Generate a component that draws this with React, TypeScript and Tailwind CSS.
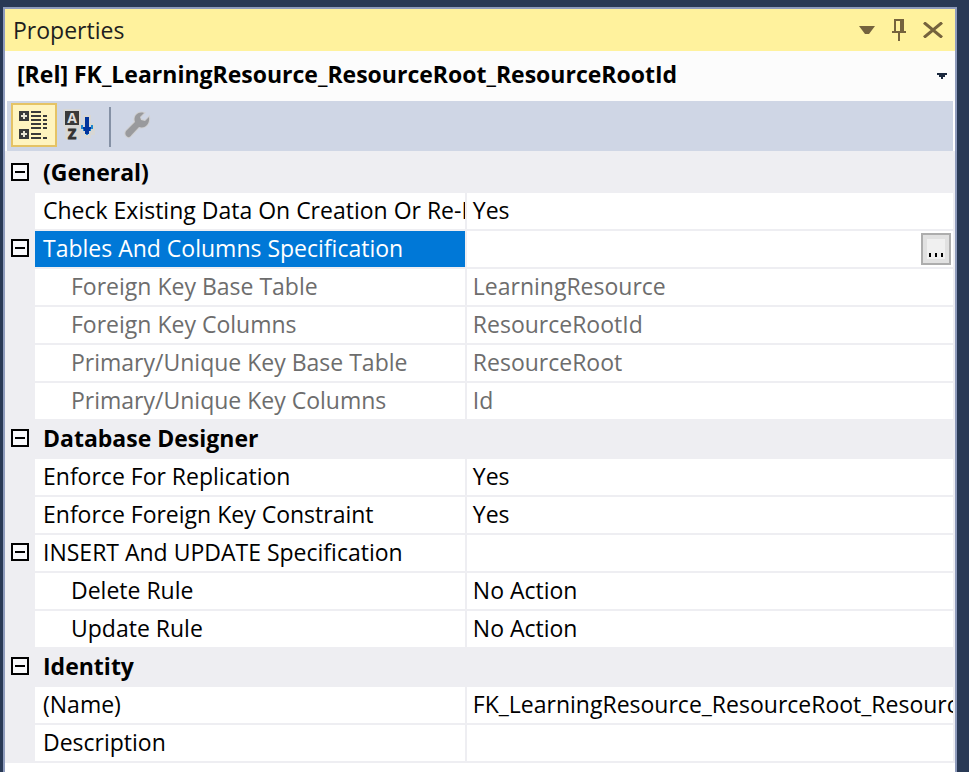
import type { ReactNode } from "react";

type Row = {
  kind: "category" | "group" | "item" | "child";
  name: string;
  value?: string;
  readOnly?: boolean;
  selected?: boolean;
};

const rows: Row[] = [
  { kind: "category", name: "(General)" },
  { kind: "item", name: "Check Existing Data On Creation Or Re-E", value: "Yes" },
  { kind: "group", name: "Tables And Columns Specification", selected: true },
  { kind: "child", name: "Foreign Key Base Table", value: "LearningResource", readOnly: true },
  { kind: "child", name: "Foreign Key Columns", value: "ResourceRootId", readOnly: true },
  { kind: "child", name: "Primary/Unique Key Base Table", value: "ResourceRoot", readOnly: true },
  { kind: "child", name: "Primary/Unique Key Columns", value: "Id", readOnly: true },
  { kind: "category", name: "Database Designer" },
  { kind: "item", name: "Enforce For Replication", value: "Yes" },
  { kind: "item", name: "Enforce Foreign Key Constraint", value: "Yes" },
  { kind: "group", name: "INSERT And UPDATE Specification" },
  { kind: "child", name: "Delete Rule", value: "No Action" },
  { kind: "child", name: "Update Rule", value: "No Action" },
  { kind: "category", name: "Identity" },
  { kind: "item", name: "(Name)", value: "FK_LearningResource_ResourceRoot_Resource" },
  { kind: "item", name: "Description" },
];

function IconButton({ label, className, children }: { label: string; className: string; children: ReactNode }) {
  return (
    <button type="button" aria-label={label} className={`flex items-center justify-center ${className}`}>
      {children}
    </button>
  );
}

function TitleBar() {
  return (
    <header className="flex h-[42px] shrink-0 items-center justify-between bg-[#fff29d] pr-1 pl-2 text-[#1e1e1e]">
      <h1 className="leading-8">Properties</h1>
      <div className="flex items-center text-[#75633d]">
        <IconButton label="Window position" className="h-8 w-8">
          <svg width="16" height="8" viewBox="0 0 16 8" fill="currentColor">
            <path d="M0 0h16L10 8H6z" />
          </svg>
        </IconButton>
        <IconButton label="Auto hide" className="h-8 w-8">
          <svg width="14" height="22" viewBox="0 0 14 22" fill="currentColor" shapeRendering="crispEdges">
            <path d="M2 0h10v12h2v2H8v8H6v-8H0v-2h2zM4 2v10h4V2z" fillRule="evenodd" />
          </svg>
        </IconButton>
        <IconButton label="Close" className="h-8 w-9">
          <svg width="20" height="16" viewBox="0 0 20 16" fill="none" stroke="currentColor" strokeWidth="3">
            <path d="M1 0.500L19 15.500M19 0.500L1 15.500" />
          </svg>
        </IconButton>
      </div>
    </header>
  );
}

function ObjectPicker() {
  return (
    <div className="relative h-[50px] shrink-0 bg-[#fcfcfc]">
      <select
        aria-label="Selected object"
        className="block h-[46px] w-full appearance-none bg-transparent pr-8 pl-3 font-bold text-black outline-none"
      >
        <option>[Rel] FK_LearningResource_ResourceRoot_ResourceRootId</option>
      </select>
      <svg
        className="pointer-events-none absolute top-[22px] right-2"
        width="10"
        height="6"
        viewBox="0 0 10 6"
        fill="#1b293e"
        shapeRendering="crispEdges"
      >
        <path d="M0 0h10v2H8v2H6v2H4V4H2V2H0z" />
      </svg>
    </div>
  );
}

function CategorizedIcon() {
  return (
    <svg width="28" height="28" viewBox="0 0 14 14" fill="#3a3a3a" shapeRendering="crispEdges">
      <path d="M0 0h5v5H0zM0 9h5v5H0z" />
      <path d="M2 1h1v1h1v1H3v1H2V3H1V2h1zM2 10h1v1h1v1H3v1H2v-1H1v-1h1z" fill="#e8e4d4" />
      <path d="M6 0h5v1H6zM6 2h5v1H6zM6 4h5v1H6zM6 6h5v1H6zM6 8h5v1H6zM6 11h5v1H6zM6 13h5v1H6z" />
      <path d="M12 2h2v1h-2zM12 4h2v1h-2zM12 6h2v1h-2zM12 8h2v1h-2zM12 13h2v1h-2z" />
    </svg>
  );
}

function AlphabeticalIcon() {
  return (
    <svg width="32" height="32" viewBox="0 0 32 32" className="overflow-visible">
      <path d="M0 0h18v18H0zM2 18h16v12H2zM20 6h8v8h4v12h-4v3h-8v-3h-4V14h4z" fill="#d7d7d5" />
      <path d="M2 2h14v14H2z" fill="#3a3a3a" />
      <text x="9" y="14" textAnchor="middle" className="text-[14px] font-bold" fill="#dedede">
        A
      </text>
      <text x="9" y="30" textAnchor="middle" className="text-[14px] font-bold" fill="#333333" stroke="#333333">
        Z
      </text>
      <path d="M18 16h2v2h2v2h4v-2h2v-2h2v4h-2v2h-2v2h-1v2h-2v-2h-1v-2h-2v-2h-2z" fill="#1c86cf" />
      <path d="M22 8h4v10h2v2h-1v2h-1v3h-4v-3h-1v-2h-1v-2h2z" fill="#00339c" />
    </svg>
  );
}

function WrenchIcon() {
  return (
    <svg width="28" height="28" viewBox="0 0 28 28">
      <path
        d="M20 2C14 0 9 5 11 11L2 20C1 22 1 24 3 25.500C5 27 6 26 7.500 24L15 16C21 18 26 13 25 6L21 10L17 9L16 6Z"
        fill="#999a9d"
        stroke="#cfcfd0"
        strokeWidth="2"
        paintOrder="stroke"
      />
    </svg>
  );
}

function Toolbar() {
  return (
    <div className="mx-0.5 flex h-[50px] shrink-0 items-start bg-[#cfd6e5] pt-0.5 pl-1">
      <IconButton label="Categorized" className="h-11 w-[46px] border-2 border-[#e5c365] bg-[#fff4bf] pr-0.5">
        <CategorizedIcon />
      </IconButton>
      <IconButton label="Alphabetical" className="h-11 w-[46px] pr-0.5">
        <AlphabeticalIcon />
      </IconButton>
      <div className="mx-1.5 mt-1 h-10 w-0.5 bg-[#8591a5]" />
      <IconButton label="Property pages" className="h-11 w-11 pr-0.5">
        <WrenchIcon />
      </IconButton>
    </div>
  );
}

function Expander({ name }: { name: string }) {
  return (
    <button
      type="button"
      aria-label={`Collapse ${name}`}
      aria-expanded="true"
      className="mx-auto mt-2 flex size-[18px] items-center justify-center border-2 border-black bg-white/60"
    >
      <span className="h-0.5 w-2.5 bg-black" />
    </button>
  );
}

function PropertyRow({ row }: { row: Row }) {
  if (row.kind === "category") {
    return (
      <tr className="h-[38px] align-top">
        <td className="p-0">
          <Expander name={row.name} />
        </td>
        <th colSpan={2} scope="colgroup" className="p-0 pl-2 text-left font-bold">
          {row.name}
        </th>
      </tr>
    );
  }
  const tone = row.selected ? "bg-[#0078d7] text-white" : row.readOnly ? "bg-white text-[#6d6d6d]" : "bg-white text-black";
  return (
    <tr className="h-[38px] align-top">
      <td className="p-0">{row.kind === "group" && <Expander name={row.name} />}</td>
      <th scope="row" className="border-r-2 border-b-2 border-[#eeeef2] p-0 text-left font-normal">
        <div className={`h-9 overflow-hidden whitespace-nowrap ${row.kind === "child" ? "pl-9" : "pl-2"} ${tone}`}>
          {row.name}
        </div>
      </th>
      <td className="border-r-2 border-b-2 border-[#eeeef2] p-0">
        <div
          className={`h-9 overflow-hidden bg-white pl-1.5 whitespace-nowrap ${row.readOnly ? "text-[#6d6d6d]" : "text-black"}`}
        >
          {row.value}
          {row.selected && (
            <button
              type="button"
              aria-label="Edit tables and columns"
              className="mt-0.5 mr-0.5 ml-auto flex h-8 w-[30px] items-center justify-center border-2 border-[#adadad] bg-[#e1e1e1]"
            >
              <span className="flex h-5 w-[18px] items-end justify-center gap-1 bg-[#f0f0f0] pb-0.5">
                <span className="h-1 w-0.5 bg-black" />
                <span className="h-1 w-0.5 bg-black" />
                <span className="h-1 w-0.5 bg-black" />
              </span>
            </button>
          )}
        </div>
      </td>
    </tr>
  );
}

export default function App() {
  return (
    <div className="flex h-screen flex-col overflow-hidden bg-[#293955] pt-[7px] pr-3 pl-[3px] font-['Open_Sans','Noto_Sans',sans-serif] text-[23px] leading-[34px]">
      <main className="flex min-h-0 flex-1 flex-col border-2 border-b-0 border-[#8e9bbc] bg-white">
        <TitleBar />
        <ObjectPicker />
        <Toolbar />
        <div className="shrink-0 bg-[#eeeef2] pt-1">
          <table className="w-full table-fixed border-separate border-spacing-0">
            <colgroup>
              <col className="w-[30px]" />
              <col className="w-5/11" />
              <col />
            </colgroup>
            <tbody>
              {rows.map((row) => (
                <PropertyRow key={row.name} row={row} />
              ))}
            </tbody>
          </table>
        </div>
        <div className="mx-0.5 flex-1 bg-white" />
      </main>
    </div>
  );
}
